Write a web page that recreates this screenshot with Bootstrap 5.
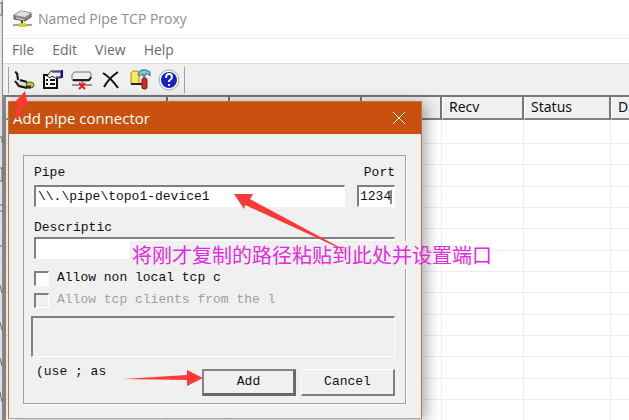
<!DOCTYPE html>
<html lang="en">
<head>
<meta charset="utf-8">
<meta name="viewport" content="width=device-width, initial-scale=1">
<title>Named Pipe TCP Proxy</title>
<link href="https://cdn.jsdelivr.net/npm/bootstrap@5.3.0/dist/css/bootstrap.min.css" rel="stylesheet">
<style>
  body { font: 14px/20px "Open Sans", "Noto Sans", sans-serif; background: #e4e5e8; color: #111; }
  .app-window { margin-left: 2px; border-left: 1px solid #8d8d8d; background: #fff; }
  .title-bar { height: 38px; padding: 0 8px; gap: 4px; color: #8e8e8e; }
  .menu-bar { height: 25px; padding: 0 9px 2px; gap: 18px; border-top: 1px solid #ececec; }
  .menu-bar a { color: #6b6b6b; }
  .tool-bar { height: 32px; background: #f0f0f0; border-top: 1px solid #dcdcdc; padding: 3px 0 0 5px; }
  .tool-set { height: 26px; padding: 0 3px; gap: 5px; border-left: 1px solid #a0a0a0; border-right: 1px solid #a0a0a0; }
  .tool-set button { width: 24px; height: 24px; line-height: 0; }
  .list-view { border-left: 3px solid #8a8c88; border-top: 2px solid #777; background: #fff; }
  .list-view table { width: 100%; min-width: 666px; table-layout: fixed; border-collapse: separate; border-spacing: 0; font-family: "Noto Sans", sans-serif; }
  .list-view th { height: 23px; padding: 0 6px; font-weight: 400; background: #f0f0f0; border-right: 2px solid #777; border-bottom: 2px solid #808080; border-left: 1px solid #fff; line-height: 20px; }
  .list-view td { height: 21px; padding: 0; border-bottom: 1px solid #eee; border-right: 1px solid #eee; }
  .list-view tr:nth-child(3n) td { height: 22px; }
  .list-view tr:first-child td { height: 24px; }
  .dialog { left: 8px; top: 101px; width: 414px; background: #f0f0f0; border: 1px solid #d0693b; border-bottom-color: #aaa; box-shadow: 4px 2px 14px rgba(0,0,0,.35); font: 13px/16px "Liberation Mono", monospace; }
  .dialog-title { height: 32px; padding: 0 15px 0 4px; background: #c9510f; color: #fff; font: 15px/20px "Open Sans", "Noto Sans", sans-serif; }
  .dialog-title button { line-height: 0; }
  .panel { margin: 21px 15px 14px 14px; padding: 9px 10px 7px 7px; border: 1px solid #a0a0a0; box-shadow: 1px 1px #fff; }
  .indent { padding-left: 3px; }
  .sunken { background: #fff; border: 1px solid #fff; border-top: 2px solid #808080; border-left: 2px solid #808080; border-radius: 0; outline: 0; padding: 0 2px; height: 22px; color: #111; }
  .port-col { width: 38px; }
  .port-col .sunken { padding: 0 1px; }
  .desc-label { height: 17px; margin-top: 13px; }
  .check-row { height: 22px; gap: 8px; }
  .check-row input { appearance: none; width: 15px; height: 15px; flex: none; padding: 0; margin: 0; }
  .check-row input:disabled { background: #f0f0f0; }
  .check-row .dim { color: #a0a0a0; }
  .well { height: 41px; margin-top: 5px; background: #f0f0f0; }
  .actions { margin-top: 12px; gap: 5px; }
  .actions .hint { padding-left: 5px; margin-right: auto; line-height: 6px; }
  .actions button { width: 94px; height: 27px; background: #f0f0f0; color: #111; border: 1px solid #fff; border-right: 2px solid #808080; border-bottom: 2px solid #808080; }
  .actions .default { border-width: 2px 3px 3px 2px; border-color: #858585 #696969 #696969 #858585; }
  .note { left: 130px; top: 241px; padding: 0 2px; color: #e42be0; font: 20px/28px "Noto Sans CJK SC", sans-serif; background: linear-gradient(#f0f0f0, #f0f0f0) no-repeat 0 0 / 291px 100%; }
  .arrows { left: 0; top: 0; pointer-events: none; }
</style>
<script src="https://cdn.jsdelivr.net/npm/bootstrap@5.3.0/dist/js/bootstrap.bundle.min.js"></script>
</head>
<body class="vh-100 overflow-hidden position-relative">
<main class="app-window h-100 d-flex flex-column">
  <header class="title-bar d-flex align-items-center">
    <svg width="23" height="20" viewBox="0 0 23 20" aria-hidden="true"><path d="M3 6l7-4 10 2v4l-6 4-11-2z" fill="#888" stroke="#555"/><path d="M3 6l7-4 10 2-6 4z" fill="#e2e2e2"/><path d="M5 9l8 2" stroke="#ddd"/><path d="M11 12v4" stroke="#333" stroke-width="2"/><path d="M2 16h19" stroke="#444"/><path d="M8 16h7" stroke="#d2d22a" stroke-width="4"/></svg>
    <span>Named Pipe TCP Proxy</span>
  </header>
  <nav class="menu-bar d-flex align-items-center">
    <a class="text-decoration-none" href="#">File</a><a class="text-decoration-none" href="#">Edit</a><a class="text-decoration-none" href="#">View</a><a class="text-decoration-none" href="#">Help</a>
  </nav>
  <div class="tool-bar">
    <div class="tool-set d-inline-flex align-items-center">
      <button class="btn p-0 border-0" aria-label="Add"><svg width="24" height="22" viewBox="0 0 24 22"><path d="M3 3l4 1 1 7 7 2-1 5-7-2-3-4 3-1z" fill="#ddd"/><path d="M3 3l2 1M5 4l1 7M3 12l4 5 8 2M8 11l7 2" fill="none" stroke="#111" stroke-width="2"/><ellipse cx="18" cy="16" rx="4" ry="3" fill="#c5d52c" stroke="#555520"/><path d="M14 18h5" stroke="#333520" stroke-width="3"/></svg></button>
      <button class="btn p-0 border-0" aria-label="Properties"><svg width="24" height="22" viewBox="0 0 24 22"><path d="M3 6h13v13H3z" fill="#fff" stroke="#111" stroke-width="2"/><path d="M5 11h2m2 0h5M5 15h2m2 0h5" stroke="#111" stroke-width="2"/><path d="M6 7l4-5h10v7h-6l-3-2-2 2z" fill="#eee" stroke="#222"/><path d="M11 3h9M15 8h5" stroke="#15158c"/><path d="M20 1h2v8h-2z" fill="#1111a0"/></svg></button>
      <button class="btn p-0 border-0" aria-label="Disconnect"><svg width="24" height="22" viewBox="0 0 24 22"><path d="M4 3h16l1 2v5l-2 2H3l-1-2V6z" fill="#eee" stroke="#777"/><path d="M3 11h16l2-3" fill="none" stroke="#222" stroke-width="2"/><path d="M12 12v4M2 16h20" stroke="#333" stroke-width="1"/><path d="M9 14l6 6m0-6l-6 6" stroke="#f01818" stroke-width="2"/></svg></button>
      <button class="btn p-0 border-0" aria-label="Delete"><svg width="22" height="22" viewBox="0 0 22 22"><path d="M3 4q8 5 15 15M18 3Q9 9 4 18" fill="none" stroke="#111" stroke-width="2"/></svg></button>
      <button class="btn p-0 border-0" aria-label="Options"><svg width="24" height="22" viewBox="0 0 24 22"><path d="M3 4l2-2h5l1 2v11H3z" fill="#ffe85c" stroke="#a08a18"/><path d="M3 15h11" stroke="#222" stroke-width="2"/><path d="M10 5l3-4h5l4 2v4l-2-2h-3v3h-2V5l-4 2z" fill="#8cc5d4" stroke="#267184"/><rect x="14" y="9" width="5" height="11" rx="2" fill="#d52c1a" stroke="#811"/></svg></button>
      <button class="btn p-0 border-0" aria-label="Help"><svg width="22" height="22" viewBox="0 0 22 22"><circle cx="11" cy="11" r="10" fill="#fff" stroke="#aaa"/><circle cx="11" cy="11" r="8" fill="#1420c8"/><path d="M8 9q0-4 3-4t3 3q0 2-3 4v1" fill="none" stroke="#fff" stroke-width="2"/><path d="M10 15h2v2h-2z" fill="#fff"/></svg></button>
    </div>
  </div>
  <section class="list-view flex-grow-1 overflow-hidden">
    <table>
      <colgroup><col style="width:162px"><col style="width:62px"><col style="width:132px"><col style="width:80px"><col style="width:82px"><col style="width:87px"><col></colgroup>
      <thead><tr><th></th><th></th><th></th><th></th><th>Recv</th><th>Status</th><th>D</th></tr></thead>
      <tbody>
        <tr><td></td><td></td><td></td><td></td><td></td><td></td><td></td></tr><tr><td></td><td></td><td></td><td></td><td></td><td></td><td></td></tr><tr><td></td><td></td><td></td><td></td><td></td><td></td><td></td></tr><tr><td></td><td></td><td></td><td></td><td></td><td></td><td></td></tr><tr><td></td><td></td><td></td><td></td><td></td><td></td><td></td></tr><tr><td></td><td></td><td></td><td></td><td></td><td></td><td></td></tr><tr><td></td><td></td><td></td><td></td><td></td><td></td><td></td></tr><tr><td></td><td></td><td></td><td></td><td></td><td></td><td></td></tr><tr><td></td><td></td><td></td><td></td><td></td><td></td><td></td></tr><tr><td></td><td></td><td></td><td></td><td></td><td></td><td></td></tr><tr><td></td><td></td><td></td><td></td><td></td><td></td><td></td></tr><tr><td></td><td></td><td></td><td></td><td></td><td></td><td></td></tr><tr><td></td><td></td><td></td><td></td><td></td><td></td><td></td></tr><tr><td></td><td></td><td></td><td></td><td></td><td></td><td></td></tr>
      </tbody>
    </table>
  </section>
</main>

<form class="dialog position-absolute" role="dialog" aria-labelledby="dlg-title">
  <div class="dialog-title d-flex align-items-center justify-content-between">
    <span id="dlg-title">Add pipe connector</span>
    <button type="button" class="btn p-0 border-0" aria-label="Close"><svg width="14" height="14" viewBox="0 0 14 14"><path d="M1 1l12 12M13 1L1 13" stroke="#fff"/></svg></button>
  </div>
  <div class="panel">
    <div class="indent d-flex justify-content-between">
      <label for="pipe">Pipe</label><label for="port">Port</label>
    </div>
    <div class="indent d-flex gap-2 mt-1">
      <input id="pipe" class="sunken flex-grow-1 me-1" value="\\.\pipe\topo1-device1">
      <div class="port-col"><input id="port" class="sunken w-100" value="1234"></div>
    </div>
    <div class="indent">
      <label class="desc-label d-block" for="desc">Descriptic</label>
      <input id="desc" class="sunken w-100 d-block">
    </div>
    <div class="indent pt-2">
      <div class="check-row d-flex align-items-center"><input type="checkbox" class="sunken" id="nonlocal"><label for="nonlocal">Allow non local tcp c</label></div>
      <div class="check-row d-flex align-items-center"><input type="checkbox" class="sunken" id="from" disabled><label for="from" class="dim">Allow tcp clients from the l</label></div>
    </div>
    <div class="well sunken"></div>
    <div class="actions d-flex">
      <span class="hint">(use ; as</span>
      <button type="submit" class="default">Add</button><button type="button">Cancel</button>
    </div>
  </div>
</form>

<div class="note position-absolute text-nowrap" lang="zh-CN">将刚才复制的路径粘贴到此处并设置端口</div>
<svg class="arrows position-absolute" width="629" height="420" viewBox="0 0 629 420" aria-hidden="true">
  <path d="M0 3h2v12H0M0 137h2v6M0 168h2v13H0M0 205h2M0 211h2M0 246h2M0 285l2 8M0 322l2 8M0 358l2 8M0 392l2 10" fill="none" stroke="#666"/>
  <g fill="#fb3a38"><path d="M25 91l3 15-4-1-6 14-3-1 3-14-4-1z"/><path d="M234 194l19 0-3 5 102 55-107-49-1 4z"/><path d="M203 378l-16 8v-6l-64-1 64-4v-5z"/></g>
  <path d="M391 190v14" stroke="#111"/>
</svg>
</body>
</html>
